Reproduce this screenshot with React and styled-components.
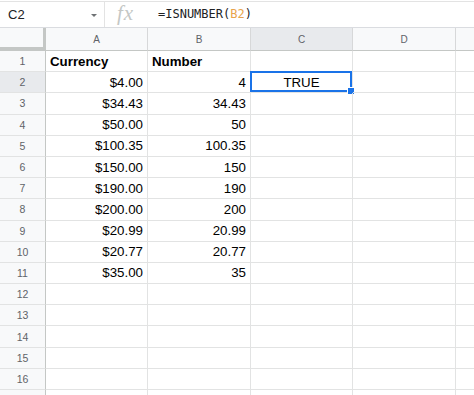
import React from "react";
import styled, { createGlobalStyle } from "styled-components";

const GlobalStyle = createGlobalStyle`
  html, body {
    margin: 0;
    padding: 0;
    background: #fff;
    overflow: hidden;
  }
  body {
    font-family: "Liberation Sans", Arial, sans-serif;
  }
`;

const COLS = ["A", "B", "C", "D", ""];

const DATA = [
  ["Currency", "Number", ""],
  ["$4.00", "4", "TRUE"],
  ["$34.43", "34.43", ""],
  ["$50.00", "50", ""],
  ["$100.35", "100.35", ""],
  ["$150.00", "150", ""],
  ["$190.00", "190", ""],
  ["$200.00", "200", ""],
  ["$20.99", "20.99", ""],
  ["$20.77", "20.77", ""],
  ["$35.00", "35", ""],
];

// 16 numbered rows are visible, the 17th only peeks in at the bottom
const VISIBLE_ROWS = 16;
const ROW_COUNT = 17;

const Page = styled.div`
  width: 474px;
  height: 395px;
  padding-top: 1px;
  box-sizing: border-box;
  overflow: hidden;
`;

const FormulaBar = styled.div`
  display: flex;
  align-items: center;
  height: 27px;
  box-sizing: border-box;
  border-top: 1px solid #e3e3e3;
  border-bottom: 1px solid #dadce0;
`;

const NameBox = styled.div`
  width: 105px;
  height: 100%;
  display: flex;
  align-items: center;
  justify-content: space-between;
  padding: 0 7px 0 8px;
  box-sizing: border-box;
  border-right: 1px solid #e3e3e3;
  font-size: 13px;
  color: #202124;
`;

const Caret = styled.span`
  width: 0;
  height: 0;
  border-left: 3px solid transparent;
  border-right: 3px solid transparent;
  border-top: 3px solid #6f7275;
  margin-top: 2px;
`;

const Fx = styled.div`
  width: 53px;
  padding-left: 12px;
  box-sizing: border-box;
  font-family: "Liberation Serif", "Times New Roman", serif;
  font-style: italic;
  font-size: 21px;
  letter-spacing: 1px;
  color: #c4c7c5;
  line-height: 1;
  margin-top: -3px;
`;

const Formula = styled.div`
  font-family: "DejaVu Sans Mono", monospace;
  font-size: 12px;
  color: #202124;
  margin-top: -1px;
`;

const Ref = styled.span`
  color: #e8a44c;
`;

const Grid = styled.div`
  display: grid;
  grid-template-columns: 46px 102px 103px 102px 103px 60px;
  grid-template-rows: 23px repeat(${ROW_COUNT}, 21.2px);
`;

const Cell = styled.div`
  box-sizing: border-box;
  position: relative;
  border-right: 1px solid #e2e3e3;
  border-bottom: 1px solid #e2e3e3;
  display: flex;
  align-items: center;
  justify-content: ${({ $align }) =>
    $align === "left" ? "flex-start" : $align === "center" ? "center" : "flex-end"};
  padding: 0 4px;
  font-size: 13.3px;
  font-weight: ${({ $bold }) => ($bold ? 700 : 400)};
  color: #000;
  white-space: nowrap;
`;

const Corner = styled.div`
  box-sizing: border-box;
  background: #f8f9fa;
  border-right: 3px solid #c4c7c5;
  border-bottom: 4px solid #c4c7c5;
`;

const ColHead = styled.div`
  box-sizing: border-box;
  background: ${({ $active }) => ($active ? "#e8eaed" : "#f8f9fa")};
  border-right: 1px solid #d7d8d9;
  border-bottom: 1px solid #c4c7c5;
  display: flex;
  align-items: center;
  justify-content: center;
  font-size: 10px;
  color: #5f6368;
`;

const RowHead = styled.div`
  box-sizing: border-box;
  background: ${({ $active }) => ($active ? "#e8eaed" : "#f8f9fa")};
  border-right: 1px solid #c4c7c5;
  border-bottom: 1px solid #e2e3e3;
  display: flex;
  align-items: center;
  justify-content: center;
  font-size: 10.5px;
  color: #5f6368;
`;

const Selection = styled.div`
  position: absolute;
  top: -1px;
  left: -1px;
  right: 0;
  bottom: 0;
  border: 2px solid #1a73e8;
  pointer-events: none;
`;

const Handle = styled.div`
  position: absolute;
  right: -5px;
  bottom: -5px;
  width: 6px;
  height: 6px;
  background: #1a73e8;
  border: 1px solid #fff;
`;

export default function App() {
  const rows = Array.from({ length: ROW_COUNT }, (_, i) => DATA[i] || ["", "", ""]);
  return (
    <Page>
      <GlobalStyle />
      <FormulaBar>
        <NameBox>
          C2
          <Caret />
        </NameBox>
        <Fx>fx</Fx>
        <Formula>
          =ISNUMBER(<Ref>B2</Ref>)
        </Formula>
      </FormulaBar>
      <Grid>
        <Corner />
        {COLS.map((c, i) => (
          <ColHead key={i} $active={c === "C"}>
            {c}
          </ColHead>
        ))}
        {rows.map((r, i) => (
          <React.Fragment key={i}>
            <RowHead $active={i === 1}>{i < VISIBLE_ROWS ? i + 1 : ""}</RowHead>
            <Cell $align={i === 0 ? "left" : "right"} $bold={i === 0}>
              {r[0]}
            </Cell>
            <Cell $align={i === 0 ? "left" : "right"} $bold={i === 0}>
              {r[1]}
            </Cell>
            <Cell $align="center">
              {r[2]}
              {i === 1 && (
                <Selection>
                  <Handle />
                </Selection>
              )}
            </Cell>
            <Cell />
            <Cell />
          </React.Fragment>
        ))}
      </Grid>
    </Page>
  );
}
